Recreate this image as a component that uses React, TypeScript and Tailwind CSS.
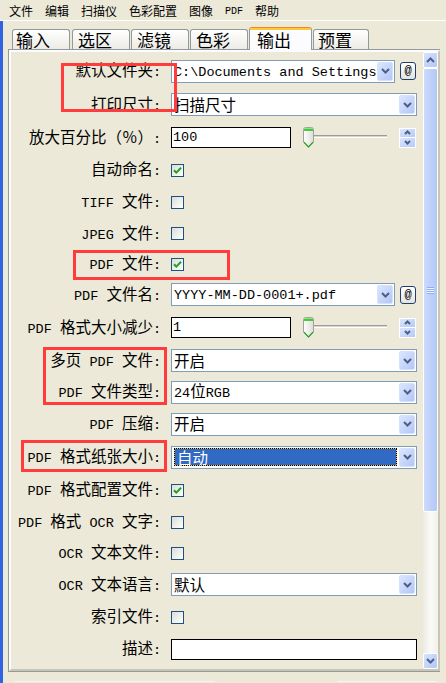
import React from "react";

const ASCII = /^[\x00-\x7F]+$/;

const LATIN = "[font-family:'Liberation_Mono',monospace] text-[13.5px]";
const HAN = "[font-family:'Noto_Sans_CJK_SC',sans-serif] text-[15.5px]";

// Splits a string into Latin and Han runs so each run gets its own face and size.
function Mixed({ text, latin = LATIN, han = HAN }: { text: string; latin?: string; han?: string }) {
  const parts = text.split(/([\x00-\x7F]+)/).filter((p) => p.length > 0);
  return (
    <>
      {parts.map((p, i) =>
        ASCII.test(p) ? (
          <span key={i} className={latin}>
            {p}
          </span>
        ) : (
          <span key={i} className={han}>
            {p}
          </span>
        )
      )}
    </>
  );
}

function Chevron({ dir, w = 9, h = 6 }: { dir: "up" | "down"; w?: number; h?: number }) {
  const d = dir === "down" ? `M1 1 L${w / 2} ${h - 1.5} L${w - 1} 1` : `M1 ${h - 1} L${w / 2} 1.5 L${w - 1} ${h - 1}`;
  return (
    <svg width={w} height={h} viewBox={`0 0 ${w} ${h}`}>
      <path d={d} fill="none" stroke="#4D6185" strokeWidth="2" strokeLinejoin="miter" />
    </svg>
  );
}

function XpButton({ dir, className }: { dir: "up" | "down"; className: string }) {
  return (
    <div
      className={`flex shrink-0 items-center justify-center rounded-[2px] border border-[#D6E1FC] bg-gradient-to-br from-[#DCE6FE] to-[#B2C6F6] ${className}`}
    >
      <Chevron dir={dir} />
    </div>
  );
}

function Combo({ value, width, selected }: { value: string; width: string; selected?: boolean }) {
  return (
    <div className={`${width} flex h-[23px] shrink-0 items-center border border-[#7F9DB9] bg-white`}>
      {selected ? (
        <div className="ml-[2px] mr-[2px] h-[18px] flex-1 bg-[#E8C25C]">
          <div className="flex h-full items-center border border-dotted border-black bg-[#316AC5] bg-clip-padding pl-[2px] leading-[16px] whitespace-pre text-white">
            <Mixed text={value} />
          </div>
        </div>
      ) : (
        <div className="min-w-0 flex-1 overflow-hidden pl-[2px] leading-[21px] whitespace-pre">
          <Mixed text={value} />
        </div>
      )}
      <XpButton dir="down" className="mr-[1px] h-[19px] w-[16px]" />
    </div>
  );
}

function AtButton() {
  return (
    <div className="ml-[5px] flex h-[18px] w-[16px] shrink-0 items-center justify-center rounded-[3px] border border-[#1D3F73] bg-gradient-to-b from-white to-[#E4E3DB] [font-family:'Liberation_Mono',monospace] text-[12px] leading-none">
      @
    </div>
  );
}

function Checkbox({ checked }: { checked: boolean }) {
  return (
    <div className="flex h-[13px] w-[13px] items-center justify-center border border-[#1C5180] bg-gradient-to-br from-[#DCDCD7] to-white">
      {checked && (
        <svg width="9" height="9" viewBox="0 0 9 9">
          <path d="M1 4.2 L3.3 6.6 L8 1.8" fill="none" stroke="#21A121" strokeWidth="2" />
        </svg>
      )}
    </div>
  );
}

function SliderThumb({ id }: { id: string }) {
  return (
    <svg width="11" height="21" viewBox="0 0 11 21">
      <defs>
        <linearGradient id={id} x1="0" x2="1" y1="0" y2="0">
          <stop offset="0" stopColor="#FFFFFF" />
          <stop offset="1" stopColor="#DEDDD5" />
        </linearGradient>
      </defs>
      <path d="M0.5 2.5 Q0.5 0.5 2.5 0.5 H8.5 Q10.5 0.5 10.5 2.5 V15 L5.5 20.3 L0.5 15 Z" fill={`url(#${id})`} stroke="#A3A29B" />
      <rect x="1" y="1" width="9" height="1.2" fill="#8AE48A" />
      <rect x="1" y="2.2" width="9" height="1.6" fill="#21BE21" />
      <path d="M1 15.2 L5.5 19.8 L10 15.2" fill="none" stroke="#21A121" strokeWidth="1.2" />
    </svg>
  );
}

function SpinField({ value, id }: { value: string; id: string }) {
  return (
    <div className="flex items-center">
      <div className="flex h-[21px] w-[120px] shrink-0 items-center border border-black bg-white pl-[1px] leading-[18px] whitespace-pre">
        <Mixed text={value} />
      </div>
      {/* trackbar: the thumb sits on top of the groove */}
      <div className="relative ml-[12px] h-[21px] w-[84px] shrink-0">
        <div className="absolute top-[8px] right-0 left-[2px] h-[3px] border-t border-b border-t-[#9D9C99] border-b-white bg-[#D8D6CB]" />
        <div className="absolute top-0 left-0">
          <SliderThumb id={id} />
        </div>
      </div>
      <div className="ml-[12px] flex h-[20px] w-[17px] shrink-0 flex-col border border-white">
        <div className="flex flex-1 items-center justify-center border-b border-white bg-gradient-to-br from-[#DCE6FE] to-[#B6C9F7]">
          <Chevron dir="up" w={7} h={5} />
        </div>
        <div className="flex flex-1 items-center justify-center bg-gradient-to-br from-[#DCE6FE] to-[#B6C9F7]">
          <Chevron dir="down" w={7} h={5} />
        </div>
      </div>
    </div>
  );
}

type Field =
  | { kind: "combo"; value: string; at?: boolean; selected?: boolean }
  | { kind: "check"; checked: boolean }
  | { kind: "spin"; value: string }
  | { kind: "edit" };

const rows: { label: string; h: string; field: Field }[] = [
  { label: "默认文件夹:", h: "h-[34px]", field: { kind: "combo", value: "C:\\Documents and Settings\\", at: true } },
  { label: "打印尺寸:", h: "h-[33px]", field: { kind: "combo", value: "扫描尺寸" } },
  { label: "放大百分比（％）:", h: "h-[33px]", field: { kind: "spin", value: "100" } },
  { label: "自动命名:", h: "h-[32px]", field: { kind: "check", checked: true } },
  { label: "TIFF 文件:", h: "h-[32px]", field: { kind: "check", checked: false } },
  { label: "JPEG 文件:", h: "h-[31px]", field: { kind: "check", checked: false } },
  { label: "PDF 文件:", h: "h-[30px]", field: { kind: "check", checked: true } },
  { label: "PDF 文件名:", h: "h-[31px]", field: { kind: "combo", value: "YYYY-MM-DD-0001+.pdf", at: true } },
  { label: "PDF 格式大小减少:", h: "h-[35px]", field: { kind: "spin", value: "1" } },
  { label: "多页 PDF 文件:", h: "h-[31px]", field: { kind: "combo", value: "开启" } },
  { label: "PDF 文件类型:", h: "h-[32px]", field: { kind: "combo", value: "24位RGB" } },
  { label: "PDF 压缩:", h: "h-[32px]", field: { kind: "combo", value: "开启" } },
  { label: "PDF 格式纸张大小:", h: "h-[34px]", field: { kind: "combo", value: "自动", selected: true } },
  { label: "PDF 格式配置文件:", h: "h-[32px]", field: { kind: "check", checked: true } },
  { label: "PDF 格式 OCR 文字:", h: "h-[32px]", field: { kind: "check", checked: false } },
  { label: "OCR 文本文件:", h: "h-[30px]", field: { kind: "check", checked: false } },
  { label: "OCR 文本语言:", h: "h-[33px]", field: { kind: "combo", value: "默认" } },
  { label: "索引文件:", h: "h-[32px]", field: { kind: "check", checked: false } },
  { label: "描述:", h: "h-[32px]", field: { kind: "edit" } },
];

function FieldView({ field, index }: { field: Field; index: number }) {
  switch (field.kind) {
    case "combo":
      return field.at ? (
        <div className="flex items-center">
          <Combo value={field.value} width="w-[224px]" />
          <AtButton />
        </div>
      ) : (
        <Combo value={field.value} width="w-[246px]" selected={field.selected} />
      );
    case "check":
      return <Checkbox checked={field.checked} />;
    case "spin":
      return <SpinField value={field.value} id={`thumb-${index}`} />;
    case "edit":
      return <div className="h-[21px] w-[246px] border border-black bg-white" />;
  }
}

const menu = ["文件", "编辑", "扫描仪", "色彩配置", "图像", "PDF", "帮助"];

function MenuBar() {
  return (
    <div className="flex h-[21px] shrink-0 items-center border-b border-white pl-[3px]">
      {menu.map((m) => (
        <span key={m} className="px-[6px] leading-[14px]">
          <Mixed
            text={m}
            latin="[font-family:'Liberation_Mono',monospace] text-[10px]"
            han="[font-family:'Noto_Sans_CJK_SC',sans-serif] text-[12px]"
          />
        </span>
      ))}
    </div>
  );
}

const tabs = [
  { name: "输入", cls: "w-[58px] pl-[3px]" },
  { name: "选区", cls: "ml-[2px] w-[58px] pl-[5px]" },
  { name: "滤镜", cls: "ml-[1px] w-[58px] pl-[5px]" },
  { name: "色彩", cls: "ml-[1px] w-[58px] pl-[5px]" },
];

function Tabs() {
  return (
    <div className="flex h-[28px] shrink-0 items-end pl-[4px] [font-family:'Noto_Sans_CJK_SC',sans-serif] text-[17px] leading-[18px]">
      {tabs.map((t) => (
        <div
          key={t.name}
          className={`flex h-[20px] items-center rounded-t-[3px] border border-b-0 border-[#919B9C] bg-gradient-to-b from-white to-[#ECEBE5] ${t.cls}`}
        >
          {t.name}
        </div>
      ))}
      <div className="relative z-10 -mb-[1px] ml-[1px] flex h-[23px] w-[63px] flex-col rounded-t-[3px] border-x border-t border-x-[#919B9C] border-t-[#E68B2C] bg-[#FCFCFE]">
        <div className="h-[2px] bg-[#FFC73C]" />
        <div className="flex flex-1 items-center pb-[1px] pl-[7px]">输出</div>
      </div>
      <div className="ml-[1px] flex h-[20px] w-[56px] items-center rounded-t-[3px] border border-b-0 border-[#919B9C] bg-gradient-to-b from-white to-[#ECEBE5] pl-[4px]">
        预置
      </div>
    </div>
  );
}

function ScrollButton({ dir }: { dir: "up" | "down" }) {
  return (
    <div className="flex h-[16px] shrink-0 items-center justify-center rounded-[2px] border border-white bg-gradient-to-br from-[#D6E2FE] to-[#B3C7F6]">
      <Chevron dir={dir} />
    </div>
  );
}

function ScrollBar() {
  return (
    <div className="flex w-[15px] shrink-0 flex-col bg-gradient-to-r from-[#ECEBE3] via-[#FAFAF7] to-[#F1F0EA]">
      <ScrollButton dir="up" />
      <div className="flex h-[444px] shrink-0 items-center justify-center rounded-[2px] border border-white bg-gradient-to-r from-[#CCDBFD] to-[#B3C7F7]">
        <div className="flex flex-col gap-[1px] bg-[#EEF4FE]">
          <div className="h-[1px] w-[7px] bg-[#8CB0F8]" />
          <div className="h-[1px] w-[7px] bg-[#8CB0F8]" />
          <div className="h-[1px] w-[7px] bg-[#8CB0F8]" />
          <div className="h-[1px] w-[7px] bg-[#8CB0F8]" />
        </div>
      </div>
      <div className="flex-1" />
      <ScrollButton dir="down" />
    </div>
  );
}

function Panel() {
  return (
    <div className="flex h-[623px] shrink-0 border border-[#919B9C]">
      <div className="flex flex-1 border-2 border-t-[#FCFCFE] border-r-[#C9C6B8] border-b-[#C9C6B8] border-l-[#FCFCFE]">
        <div className="flex min-w-0 flex-1 flex-col overflow-hidden pt-[2px] pr-[6px]">
          {rows.map((r, i) => (
            <div key={r.label} className={`flex shrink-0 items-center ${r.h}`}>
              <div className="w-[150px] shrink-0 text-right leading-[18px] whitespace-pre">
                <Mixed text={r.label} />
              </div>
              <div className="ml-[10px]">
                <FieldView field={r.field} index={i} />
              </div>
            </div>
          ))}
        </div>
        <ScrollBar />
      </div>
    </div>
  );
}

function Mark({ className }: { className: string }) {
  return <div className={`pointer-events-none absolute border-[3px] border-[#FF3B3B] ${className}`} />;
}

export default function App() {
  return (
    <div className="relative flex h-[683px] w-[446px] flex-col overflow-hidden bg-[#ECE9D8] text-black">
      <MenuBar />
      <div className="flex flex-1">
        <div className="w-[3px] shrink-0 bg-[#2F63E4]" />
        <div className="ml-[5px] flex w-[432px] flex-col">
          <Tabs />
          <Panel />
          <div className="flex flex-1 items-end">
            <div className="ml-[7px] h-[2px] w-[200px] border-t border-[#F6F5F0]" />
            <div className="ml-auto mr-[4px] h-[2px] w-[98px] border-t border-[#F6F5F0]" />
          </div>
        </div>
      </div>

      {/* hand-drawn highlight frames */}
      <Mark className="top-[63px] left-[61px] h-[49px] w-[116px]" />
      <Mark className="top-[250px] left-[73px] h-[30px] w-[157px]" />
      <Mark className="top-[347px] left-[43px] h-[58px] w-[124px]" />
      <Mark className="top-[440px] left-[21px] h-[32px] w-[146px]" />
    </div>
  );
}
